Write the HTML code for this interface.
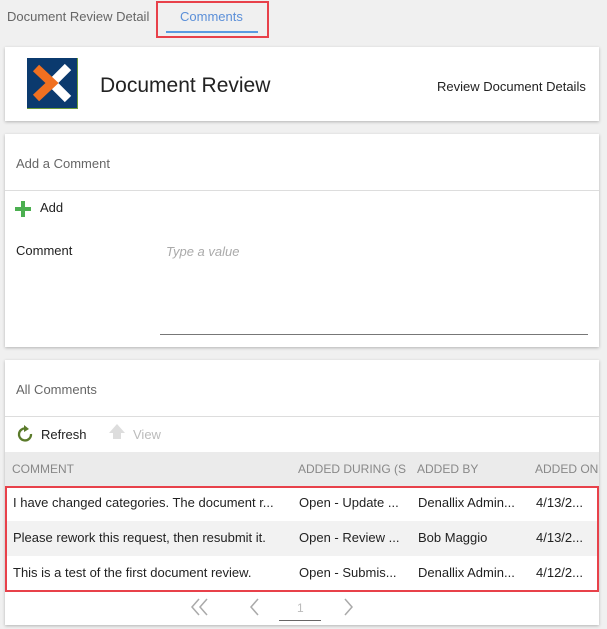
<!DOCTYPE html>
<html><head><style>
*{margin:0;padding:0;box-sizing:border-box}
body{width:607px;height:629px;background:#f0f0f0;font-family:"Liberation Sans",sans-serif;position:relative;overflow:hidden;color:#222}
.a{position:absolute}
.panel{position:absolute;left:5px;width:594px;background:#fff;box-shadow:0 1px 3px rgba(0,0,0,.25)}
.t{position:absolute;white-space:nowrap;font-size:13px}
</style></head><body>
<div class="t" style="left:7px;top:9px;color:#666;font-size:13px">Document Review Detail</div>
<div class="t" style="left:180px;top:9px;color:#5b8fd8;font-size:13px">Comments</div>
<div class="a" style="left:166px;top:31px;width:92px;height:2px;background:#5b9be0"></div>
<div class="a" style="left:156px;top:1px;width:113px;height:37px;border:2px solid #e8414a"></div>

<div class="panel" style="top:47px;height:74px">
  <svg class="a" style="left:22px;top:11px" width="51" height="51" viewBox="0 0 51 51">
    <rect width="51" height="51" fill="#0b3a6e"/>
    <rect x="50" y="0" width="1" height="51" fill="#6a9a3a"/><rect x="0" y="50" width="51" height="1" fill="#6a9a3a"/>
    <path d="M25 25 L41 9 M25 25 L41 41" stroke="#fff" stroke-width="9" fill="none"/>
    <path d="M9 10 L25 25 L9 40" stroke="#f07020" stroke-width="9" fill="none" stroke-linejoin="miter"/>
  </svg>
  <div class="t" style="left:95px;top:27px;font-size:21px;color:#222">Document Review</div>
  <div class="t" style="left:432px;top:32px;font-size:13px;color:#222">Review Document Details</div>
</div>

<div class="panel" style="top:134px;height:213px">
  <div class="t" style="left:11px;top:22px;color:#666;font-size:13px">Add a Comment</div>
  <div class="a" style="left:0;top:56px;width:594px;height:1px;background:#ddd"></div>
  <div class="a" style="left:10px;top:73px;width:16px;height:4px;background:#4caf50"></div>
  <div class="a" style="left:16px;top:67px;width:4px;height:16px;background:#4caf50"></div>
  <div class="t" style="left:35px;top:66px">Add</div>
  <div class="t" style="left:11px;top:109px">Comment</div>
  <div class="t" style="left:161px;top:110px;color:#aaa;font-style:italic">Type a value</div>
  <div class="a" style="left:155px;top:200px;width:428px;height:1px;background:#777"></div>
</div>

<div class="panel" style="top:360px;height:265px">
  <div class="t" style="left:11px;top:22px;color:#666">All Comments</div>
  <div class="a" style="left:0;top:56px;width:594px;height:1px;background:#ddd"></div>
  <svg class="a" style="left:11px;top:65px" width="18" height="18" viewBox="0 0 18 18"><path d="M10 3.5A6 6 0 1 0 15 9" fill="none" stroke="#5a7a2a" stroke-width="2.3"/><polygon points="8,0 13,4 8,7" fill="#5a7a2a"/></svg>
  <div class="t" style="left:36px;top:67px">Refresh</div>
  <div class="a" style="left:104px;top:64px;width:0;height:0;border-left:8px solid transparent;border-right:8px solid transparent;border-bottom:9px solid #ddd"></div>
  <div class="a" style="left:108px;top:73px;width:8px;height:6px;background:#ddd"></div>
  <div class="t" style="left:128px;top:67px;color:#bbb">View</div>
  <div class="a" style="left:0;top:92px;width:594px;height:34px;background:#ebebeb"></div>
  <div class="t" style="left:7px;top:102px;color:#888;font-size:12px">COMMENT</div>
  <div class="t" style="left:293px;top:102px;color:#888;font-size:12px;width:110px;overflow:hidden">ADDED DURING (S</div>
  <div class="t" style="left:412px;top:102px;color:#888;font-size:12px">ADDED BY</div>
  <div class="t" style="left:530px;top:102px;color:#888;font-size:12px;width:64px;overflow:hidden">ADDED ON</div>
  <div class="a" style="left:0;top:161px;width:594px;height:35px;background:#f2f2f2"></div>
  <div class="t" style="left:8px;top:135px">I have changed categories. The document r...</div>
  <div class="t" style="left:294px;top:135px">Open - Update ...</div>
  <div class="t" style="left:413px;top:135px">Denallix Admin...</div>
  <div class="t" style="left:531px;top:135px">4/13/2...</div>
  <div class="t" style="left:8px;top:170px">Please rework this request, then resubmit it.</div>
  <div class="t" style="left:294px;top:170px">Open - Review ...</div>
  <div class="t" style="left:413px;top:170px">Bob Maggio</div>
  <div class="t" style="left:531px;top:170px">4/13/2...</div>
  <div class="t" style="left:8px;top:205px">This is a test of the first document review.</div>
  <div class="t" style="left:294px;top:205px">Open - Submis...</div>
  <div class="t" style="left:413px;top:205px">Denallix Admin...</div>
  <div class="t" style="left:531px;top:205px">4/12/2...</div>
  <div class="a" style="left:0;top:126px;width:594px;height:106px;border:2px solid #e8414a"></div>
  <svg class="a" style="left:185px;top:238px" width="22" height="18" viewBox="0 0 22 18"><path d="M9 1 L2 9 L9 17 M17 1 L10 9 L17 17" fill="none" stroke="#aaa" stroke-width="1.5"/></svg>
  <svg class="a" style="left:244px;top:238px" width="12" height="18" viewBox="0 0 12 18"><path d="M9 1 L2 9 L9 17" fill="none" stroke="#aaa" stroke-width="1.5"/></svg>
  <div class="t" style="left:292px;top:241px;color:#bbb;font-size:12px">1</div>
  <div class="a" style="left:274px;top:260px;width:42px;height:1px;background:#666"></div>
  <svg class="a" style="left:337px;top:238px" width="12" height="18" viewBox="0 0 12 18"><path d="M3 1 L10 9 L3 17" fill="none" stroke="#aaa" stroke-width="1.5"/></svg>
</div>
</body></html>
